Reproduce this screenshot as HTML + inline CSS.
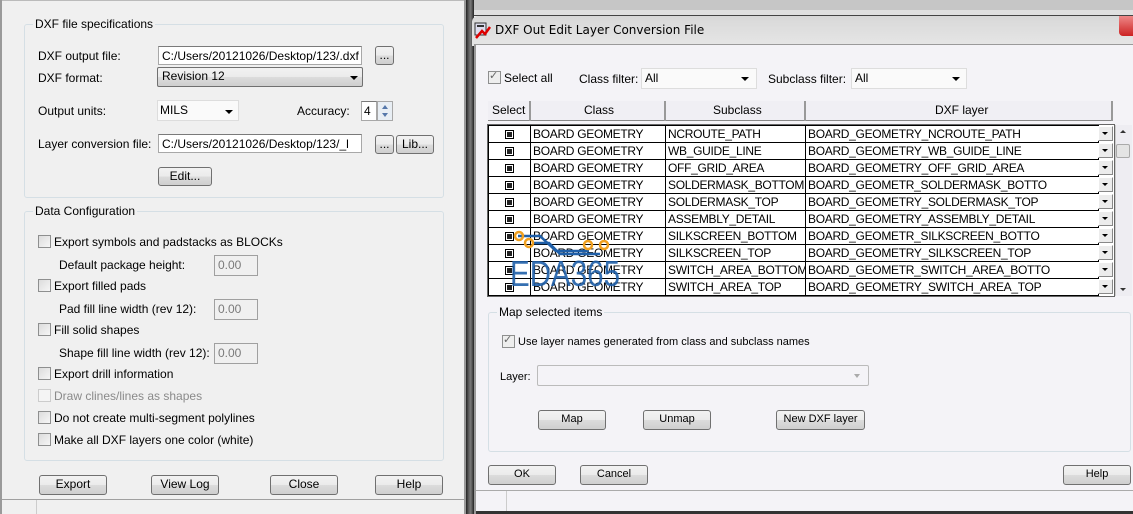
<!DOCTYPE html>
<html><head><meta charset="utf-8"><style>
*{box-sizing:border-box;margin:0;padding:0}
body{width:1133px;height:514px;overflow:hidden;background:#f0f0f0;font-family:"Liberation Sans",Arial,sans-serif;font-size:12px;color:#000;position:relative}
.a{position:absolute}
.lbl{position:absolute;font-size:12px;white-space:nowrap}
.grp{position:absolute;border:1px solid #d5dfe5;border-radius:3px}
.gt{position:absolute;top:-8px;left:8px;background:#f0f0f0;padding:0 2px;font-size:12px}
.inp{position:absolute;background:#fff;border:1px solid #a8a8a8;border-top-color:#7a7a7a;font-size:12px;padding:2px 3px;white-space:nowrap;overflow:hidden}
.btn{position:absolute;border:1px solid #707070;border-radius:3px;background:linear-gradient(#f2f2f2,#ebebeb 50%,#dcdcdc 51%,#cfcfcf);text-align:center;font-size:12px;line-height:16px}
.cb{position:absolute;width:13px;height:13px;border:1px solid #8e8f8f;background:linear-gradient(135deg,#dcdcdc,#f6f6f6)}
.dis{background:#f0f0f0;color:#7a7a7a;border-color:#a0a0a0}
.arr{position:absolute;width:0;height:0;border-left:4px solid transparent;border-right:4px solid transparent;border-top:4px solid #000}
table{border-collapse:collapse;font-size:12px;table-layout:fixed;width:610px}
td{border:1px solid #000;height:17px;padding:0 2px;white-space:nowrap;overflow:hidden;background:#fff;font-family:"Liberation Sans",sans-serif;letter-spacing:-0.3px}
.xb{display:inline-block;width:9px;height:9px;border:1px solid #000;background:#fff;position:relative;vertical-align:middle}
.xb:after{content:"";position:absolute;left:1px;top:1px;width:5px;height:5px;background:#222}
.dd{position:absolute;width:15px;height:15px;background:#ececec;border:1px solid #fff;border-right-color:#888;border-bottom-color:#888}
</style></head><body>
<div class="a" style="left:0;top:0;width:466px;height:514px;background:#f0f0f0;border-left:2px solid #9a9a9a;border-right:2px solid #9a9a9a"></div>
<div class="a" style="left:2px;top:0;width:462px;height:1px;background:#bbb"></div>
<div class="grp" style="left:24px;top:24px;width:420px;height:174px"><span class="gt">DXF file specifications</span></div>
<div class="lbl" style="left:38px;top:49px">DXF output file:</div>
<div class="inp" style="left:158px;top:46px;width:204px;height:19px">C:/Users/20121026/Desktop/123/.dxf</div>
<div class="btn" style="left:375px;top:46px;width:19px;height:19px">...</div>
<div class="lbl" style="left:38px;top:71px">DXF format:</div>
<div class="btn" style="left:157px;top:67px;width:206px;height:20px;text-align:left;padding-left:4px;border-radius:2px">Revision 12</div>
<div class="arr" style="left:350px;top:76px"></div>
<div class="lbl" style="left:38px;top:104px">Output units:</div>
<div class="a" style="left:157px;top:100px;width:82px;height:21px;background:#fafafa;border:1px solid #ddd"></div>
<div class="lbl" style="left:160px;top:103px">MILS</div>
<div class="arr" style="left:225px;top:110px"></div>
<div class="lbl" style="left:297px;top:104px">Accuracy:</div>
<div class="inp" style="left:361px;top:101px;width:16px;height:20px;padding:2px 2px">4</div>
<div class="a" style="left:377px;top:101px;width:16px;height:20px;background:#e8eef4;border:1px solid #a8a8a8"></div>
<div class="a" style="left:382px;top:105px;border-left:3px solid transparent;border-right:3px solid transparent;border-bottom:4px solid #5577aa"></div>
<div class="a" style="left:382px;top:113px;border-left:3px solid transparent;border-right:3px solid transparent;border-top:4px solid #5577aa"></div>
<div class="lbl" style="left:38px;top:137px">Layer conversion file:</div>
<div class="inp" style="left:158px;top:134px;width:204px;height:19px">C:/Users/20121026/Desktop/123/_l</div>
<div class="btn" style="left:375px;top:135px;width:19px;height:19px">...</div>
<div class="btn" style="left:396px;top:135px;width:38px;height:19px">Lib...</div>
<div class="btn" style="left:158px;top:167px;width:54px;height:19px">Edit...</div>

<div class="grp" style="left:24px;top:211px;width:420px;height:250px"><span class="gt">Data Configuration</span></div>
<div class="cb" style="left:38px;top:235px"></div><div class="lbl" style="left:54px;top:235px">Export symbols and padstacks as BLOCKs</div>
<div class="lbl" style="left:59px;top:258px">Default package height:</div>
<div class="inp dis" style="left:214px;top:255px;width:44px;height:21px">0.00</div>
<div class="cb" style="left:38px;top:279px"></div><div class="lbl" style="left:54px;top:279px">Export filled pads</div>
<div class="lbl" style="left:59px;top:302px">Pad fill line width (rev 12):</div>
<div class="inp dis" style="left:214px;top:299px;width:44px;height:21px">0.00</div>
<div class="cb" style="left:38px;top:323px"></div><div class="lbl" style="left:54px;top:323px">Fill solid shapes</div>
<div class="lbl" style="left:59px;top:346px">Shape fill line width (rev 12):</div>
<div class="inp dis" style="left:214px;top:343px;width:44px;height:21px">0.00</div>
<div class="cb" style="left:38px;top:367px"></div><div class="lbl" style="left:54px;top:367px">Export drill information</div>
<div class="cb" style="left:38px;top:389px;border-color:#ccc;background:#f4f4f4"></div><div class="lbl" style="left:54px;top:389px;color:#8a8a8a">Draw clines/lines as shapes</div>
<div class="cb" style="left:38px;top:411px"></div><div class="lbl" style="left:54px;top:411px">Do not create multi-segment polylines</div>
<div class="cb" style="left:38px;top:433px"></div><div class="lbl" style="left:54px;top:433px">Make all DXF layers one color (white)</div>
<div class="btn" style="left:39px;top:475px;width:68px;height:20px">Export</div>
<div class="btn" style="left:151px;top:475px;width:68px;height:20px">View Log</div>
<div class="btn" style="left:270px;top:475px;width:68px;height:20px">Close</div>
<div class="btn" style="left:375px;top:475px;width:68px;height:20px">Help</div>
<div class="a" style="left:2px;top:499px;width:462px;height:1px;background:#a0a0a0"></div>
<div class="a" style="left:36px;top:500px;width:1px;height:14px;background:#ccc"></div>

<div class="a" style="left:466px;top:0;width:8px;height:514px;background:linear-gradient(90deg,#222,#666 40%,#777 60%,#222)"></div>

<div class="a" style="left:474px;top:0;width:659px;height:10px;background:#c6c6c6"></div>
<div class="a" style="left:474px;top:10px;width:659px;height:6px;background:#e0e0e0;border-bottom:1px solid #444"></div>
<div class="a" style="left:472px;top:16px;width:661px;height:30px;background:linear-gradient(#d8d8d8,#e6e6e6);border-top-left-radius:6px"></div>
<svg class="a" style="left:474px;top:22px" width="18" height="18" viewBox="0 0 18 18"><rect x="1" y="1" width="11" height="12" fill="#dde" stroke="#333"/><rect x="3" y="3" width="7" height="2" fill="#333"/><path d="M2 16 L8 9 L11 12 L16 5" stroke="#d00" stroke-width="2.5" fill="none"/></svg>
<div class="lbl" style="left:495px;top:23px;font-family:'DejaVu Sans',sans-serif;font-size:12px">DXF Out Edit Layer Conversion File</div>
<div class="a" style="left:1119px;top:16px;width:14px;height:20px;background:linear-gradient(#e88,#c22);border-radius:0 0 0 4px"></div>
<div class="a" style="left:474px;top:44px;width:659px;height:470px;background:#f4f3f7;border-left:2px solid #9a9a9a;border-top:1px solid #9a9a9a"></div>

<div class="cb" style="left:488px;top:71px;background:#eee"></div><div class="lbl" style="left:489px;top:69px;font-size:11px;color:#666">✓</div>
<div class="lbl" style="left:504px;top:71px">Select all</div>
<div class="lbl" style="left:579px;top:72px">Class filter:</div>
<div class="a" style="left:641px;top:68px;width:116px;height:21px;background:#fafafa;border:1px solid #ddd"></div>
<div class="lbl" style="left:645px;top:71px">All</div><div class="arr" style="left:741px;top:77px"></div>
<div class="lbl" style="left:768px;top:72px">Subclass filter:</div>
<div class="a" style="left:851px;top:68px;width:116px;height:21px;background:#fafafa;border:1px solid #ddd"></div>
<div class="lbl" style="left:855px;top:71px">All</div><div class="arr" style="left:952px;top:77px"></div>

<div class="a" style="left:488px;top:101px;width:625px;height:20px;background:#f0eff4;border-bottom:1px solid #888"></div>
<div class="lbl" style="left:492px;top:103px">Select</div>
<div class="a" style="left:529px;top:101px;width:2px;height:20px;background:#999"></div>
<div class="lbl" style="left:584px;top:103px">Class</div>
<div class="a" style="left:664px;top:101px;width:2px;height:20px;background:#999"></div>
<div class="lbl" style="left:713px;top:103px">Subclass</div>
<div class="a" style="left:804px;top:101px;width:2px;height:20px;background:#999"></div>
<div class="lbl" style="left:935px;top:103px">DXF layer</div>
<div class="a" style="left:1111px;top:101px;width:2px;height:20px;background:#999"></div>

<div class="a" style="left:487px;top:124px;width:628px;height:173px;background:#fff;border:1px solid #666"></div>
<table class="a" style="left:488px;top:125px">
<colgroup><col style="width:42px"><col style="width:135px"><col style="width:140px"><col style="width:293px"></colgroup>
<tr><td style="text-align:center"><span class="xb"></span></td><td>BOARD GEOMETRY</td><td>NCROUTE_PATH</td><td>BOARD_GEOMETRY_NCROUTE_PATH</td></tr>
<tr><td style="text-align:center"><span class="xb"></span></td><td>BOARD GEOMETRY</td><td>WB_GUIDE_LINE</td><td>BOARD_GEOMETRY_WB_GUIDE_LINE</td></tr>
<tr><td style="text-align:center"><span class="xb"></span></td><td>BOARD GEOMETRY</td><td>OFF_GRID_AREA</td><td>BOARD_GEOMETRY_OFF_GRID_AREA</td></tr>
<tr><td style="text-align:center"><span class="xb"></span></td><td>BOARD GEOMETRY</td><td>SOLDERMASK_BOTTOM</td><td>BOARD_GEOMETR_SOLDERMASK_BOTTO</td></tr>
<tr><td style="text-align:center"><span class="xb"></span></td><td>BOARD GEOMETRY</td><td>SOLDERMASK_TOP</td><td>BOARD_GEOMETRY_SOLDERMASK_TOP</td></tr>
<tr><td style="text-align:center"><span class="xb"></span></td><td>BOARD GEOMETRY</td><td>ASSEMBLY_DETAIL</td><td>BOARD_GEOMETRY_ASSEMBLY_DETAIL</td></tr>
<tr><td style="text-align:center"><span class="xb"></span></td><td>BOARD GEOMETRY</td><td>SILKSCREEN_BOTTOM</td><td>BOARD_GEOMETR_SILKSCREEN_BOTTO</td></tr>
<tr><td style="text-align:center"><span class="xb"></span></td><td>BOARD GEOMETRY</td><td>SILKSCREEN_TOP</td><td>BOARD_GEOMETRY_SILKSCREEN_TOP</td></tr>
<tr><td style="text-align:center"><span class="xb"></span></td><td>BOARD GEOMETRY</td><td>SWITCH_AREA_BOTTOM</td><td>BOARD_GEOMETR_SWITCH_AREA_BOTTO</td></tr>
<tr><td style="text-align:center"><span class="xb"></span></td><td>BOARD GEOMETRY</td><td>SWITCH_AREA_TOP</td><td>BOARD_GEOMETRY_SWITCH_AREA_TOP</td></tr>
</table>
<div class="a" style="left:1098px;top:125px;width:16px;height:171px">
<div class="dd" style="left:0;top:1px"></div><div class="dd" style="left:0;top:18px"></div><div class="dd" style="left:0;top:35px"></div><div class="dd" style="left:0;top:52px"></div><div class="dd" style="left:0;top:69px"></div><div class="dd" style="left:0;top:86px"></div><div class="dd" style="left:0;top:103px"></div><div class="dd" style="left:0;top:120px"></div><div class="dd" style="left:0;top:137px"></div><div class="dd" style="left:0;top:154px"></div>
<div class="arr" style="left:4px;top:7px;border-width:3px 3px 0 3px"></div><div class="arr" style="left:4px;top:24px;border-width:3px 3px 0 3px"></div><div class="arr" style="left:4px;top:41px;border-width:3px 3px 0 3px"></div><div class="arr" style="left:4px;top:58px;border-width:3px 3px 0 3px"></div><div class="arr" style="left:4px;top:75px;border-width:3px 3px 0 3px"></div><div class="arr" style="left:4px;top:92px;border-width:3px 3px 0 3px"></div><div class="arr" style="left:4px;top:109px;border-width:3px 3px 0 3px"></div><div class="arr" style="left:4px;top:126px;border-width:3px 3px 0 3px"></div><div class="arr" style="left:4px;top:143px;border-width:3px 3px 0 3px"></div><div class="arr" style="left:4px;top:160px;border-width:3px 3px 0 3px"></div>
</div>
<div class="a" style="left:1115px;top:125px;width:17px;height:171px;background:#eeedf2;border-left:1px solid #ccc"></div>
<div class="a" style="left:1120px;top:130px;border-left:3px solid transparent;border-right:3px solid transparent;border-bottom:3px solid #333"></div>
<div class="a" style="left:1120px;top:288px;border-left:3px solid transparent;border-right:3px solid transparent;border-top:3px solid #333"></div>
<div class="a" style="left:1116px;top:144px;width:14px;height:14px;background:#e4e4e4;border:1px solid #aaa;border-radius:2px"></div>

<svg class="a" style="left:500px;top:228px" width="130" height="62" viewBox="0 0 130 62">
<path d="M18 8 H40 L56 23 H89" stroke="#1f5fa8" stroke-width="2.5" fill="none"/>
<path d="M33 15 H49 L60 26 H100" stroke="#1f5fa8" stroke-width="2.5" fill="none"/>
<circle cx="19" cy="8" r="4" fill="none" stroke="#f0a020" stroke-width="2.5"/>
<circle cx="29" cy="15" r="4" fill="none" stroke="#f0a020" stroke-width="2.5"/>
<circle cx="88" cy="17" r="4" fill="none" stroke="#f0a020" stroke-width="2.5"/>
<circle cx="104" cy="17" r="4" fill="none" stroke="#f0a020" stroke-width="2.5"/>
<text x="10" y="58" font-family="Liberation Sans,sans-serif" font-size="36" textLength="110" lengthAdjust="spacingAndGlyphs" fill="#1f5fa8" fill-opacity=".9">EDA365</text>
</svg>

<div class="grp" style="left:488px;top:312px;width:643px;height:140px"><span class="gt" style="background:#f4f3f7">Map selected items</span></div>
<div class="cb" style="left:502px;top:335px;background:#eee"></div><div class="lbl" style="left:503px;top:333px;font-size:11px;color:#666">✓</div>
<div class="lbl" style="left:518px;top:336px;font-size:11px">Use layer names generated from class and subclass names</div>
<div class="lbl" style="left:500px;top:371px;font-size:11px">Layer:</div>
<div class="a" style="left:537px;top:365px;width:332px;height:21px;border:1px solid #bbb;border-radius:2px;background:#f4f3f7"></div>
<div class="arr" style="left:854px;top:374px;border-top-color:#aaa;border-width:4px 3px 0 3px"></div>
<div class="btn" style="left:538px;top:410px;width:68px;height:20px;font-size:11px">Map</div>
<div class="btn" style="left:643px;top:410px;width:68px;height:20px;font-size:11px">Unmap</div>
<div class="btn" style="left:776px;top:410px;width:89px;height:20px;font-size:11px">New DXF layer</div>
<div class="btn" style="left:488px;top:465px;width:68px;height:20px;font-size:11px">OK</div>
<div class="btn" style="left:580px;top:465px;width:68px;height:20px;font-size:11px">Cancel</div>
<div class="btn" style="left:1063px;top:465px;width:68px;height:20px;font-size:11px">Help</div>
<div class="a" style="left:476px;top:490px;width:657px;height:1px;background:#aaa"></div>
<div class="a" style="left:506px;top:491px;width:1px;height:23px;background:#ccc"></div>
<div class="a" style="left:476px;top:511px;width:657px;height:3px;background:#333"></div>
</body></html>
